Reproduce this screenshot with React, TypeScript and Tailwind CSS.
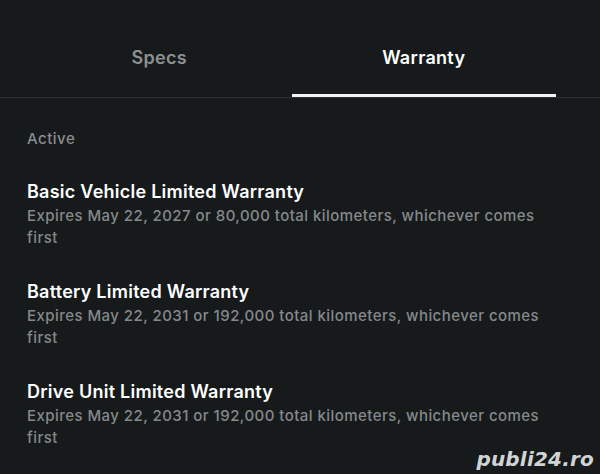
import React from "react";

const items = [
  { title: "Basic Vehicle Limited Warranty", desc: "Expires May 22, 2027 or 80,000 total kilometers, whichever comes first" },
  { title: "Battery Limited Warranty", desc: "Expires May 22, 2031 or 192,000 total kilometers, whichever comes first" },
  { title: "Drive Unit Limited Warranty", desc: "Expires May 22, 2031 or 192,000 total kilometers, whichever comes first" },
];

export default function App() {
  return (
    <div className="relative w-[600px] h-[474px] overflow-hidden bg-[#161a1b]" style={{ fontFamily: "Inter, 'Noto Sans', sans-serif" }}>
      <div className="border-b border-[#2c3032] pl-[27px] pr-[44px]">
        <div className="flex">
          <div className="flex-1 h-[97px] flex items-center justify-center text-[18px] font-semibold text-[#8d9092] tracking-[0.3px] pt-[18px]">Specs</div>
          <div className="flex-1 h-[97px] relative flex items-center justify-center text-[18px] font-semibold text-white tracking-[0.3px] pt-[18px]">
            Warranty
            <div className="absolute left-0 right-0 bottom-0 h-[3px] bg-[#f2f4f4]" />
          </div>
        </div>
      </div>
      <div className="px-[27px] pt-[30px]">
        <div className="text-[15px] font-medium text-[#8a8d8f] leading-[22px] tracking-[0.5px]">Active</div>
        <div className="mt-[30px] flex flex-col gap-[32px]">
          {items.map((it) => (
            <div key={it.title} className="w-[530px]">
              <div className="text-[18px] font-semibold text-white leading-[24px] tracking-[0.25px]">{it.title}</div>
              <div className="mt-[1px] text-[15px] font-medium text-[#85898b] leading-[21.5px] tracking-[0.45px]">{it.desc}</div>
            </div>
          ))}
        </div>
      </div>
      <div className="absolute right-[6px] bottom-[3px] text-[20px] leading-[24px] font-bold italic text-[#d2d4d4] tracking-[0.2px]" style={{ fontFamily: "'DejaVu Sans', sans-serif" }}>
        publi24.ro
      </div>
    </div>
  );
}
